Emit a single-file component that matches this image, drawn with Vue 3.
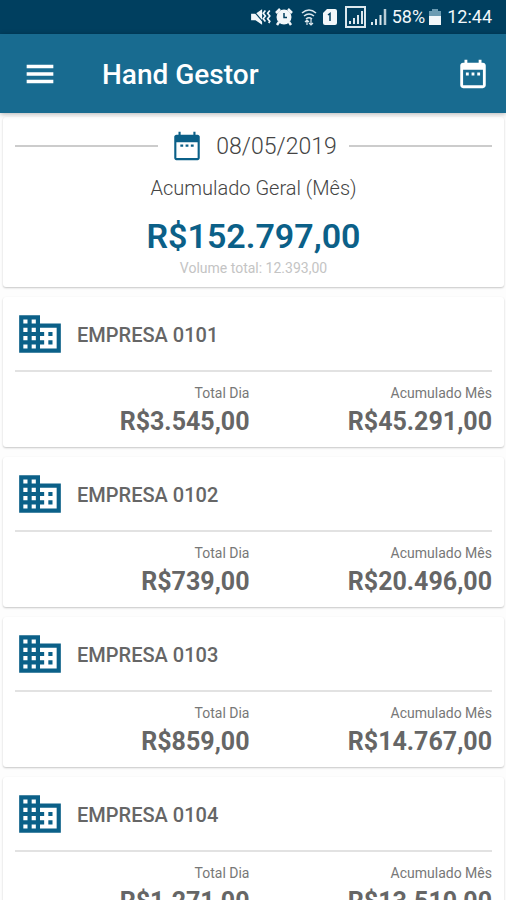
<script setup>
import { ref } from 'vue'

const date = ref('08/05/2019')

const total = {
  label: 'Acumulado Geral (Mês)',
  value: 'R$152.797,00',
  volume: '12.393,00'
}

const companies = [
  { id: 1, name: 'EMPRESA 0101', day: 'R$3.545,00', month: 'R$45.291,00' },
  { id: 2, name: 'EMPRESA 0102', day: 'R$739,00', month: 'R$20.496,00' },
  { id: 3, name: 'EMPRESA 0103', day: 'R$859,00', month: 'R$14.767,00' },
  { id: 4, name: 'EMPRESA 0104', day: 'R$1.271,00', month: 'R$13.510,00' }
]

const calendarPath = 'M9 11H7v2h2v-2zm4 0h-2v2h2v-2zm4 0h-2v2h2v-2zm2-7h-1V2h-2v2H8V2H6v2H5c-1.11 0-1.99.9-1.99 2L3 20c0 1.1.89 2 2 2h14c1.1 0 2-.9 2-2V6c0-1.1-.9-2-2-2zm0 16H5V9h14v11z'
// thinner frame than the toolbar one
const eventPath = 'M9.300 11H7.300v1.600h2zm3.700 0h-2v1.600h2zm3.700 0h-2v1.600h2zM19.500 4H18V2h-1.500v2h-9V2H6v2H4.500C3.700 4 3 4.700 3 5.500v15C3 21.300 3.700 22 4.500 22h15c.8 0 1.500-.7 1.500-1.500v-15c0-.8-.7-1.500-1.500-1.500zm0 16.500h-15V9.300h15z'
const domainPath = 'M12 7V3H2v18h20V7H12zM6 19H4v-2h2v2zm0-4H4v-2h2v2zm0-4H4V9h2v2zm0-4H4V5h2v2zm4 12H8v-2h2v2zm0-4H8v-2h2v2zm0-4H8V9h2v2zm0-4H8V5h2v2zm10 12h-8v-2h2v-2h-2v-2h2v-2h-2V9h8v10zm-2-8h-2v2h2v-2zm0 4h-2v2h2v-2z'
</script>

<template>
  <div class="app">
    <div class="status-bar">
      <!-- mute / vibrate -->
      <svg class="status-icon" width="22" height="20" viewBox="0 0 20 18">
        <path d="M1 6h4l6-4v14l-6-4H1z" fill="#f2f7fa" />
        <path d="M2 2l12 14" stroke="#003f5f" stroke-width="1" />
        <path d="M14 3l-2 2.500 2 2.500-2 2.500 2 2.500M18 3l-2 2.500 2 2.500-2 2.500 2 2.500-1 1.500" fill="none" stroke="#f2f7fa" stroke-width="1.500" />
      </svg>
      <!-- alarm -->
      <svg class="status-icon alarm" width="18" height="18" viewBox="0 0 18 18">
        <path d="M1 5l4-4M17 5l-4-4M4 14l-2 3M14 14l2 3" stroke="#f2f7fa" stroke-width="2.500" />
        <circle cx="9" cy="9" r="7.500" fill="#f2f7fa" />
        <path d="M9 5v4.500h3" fill="none" stroke="#003f5f" stroke-width="1.500" />
      </svg>
      <!-- wifi -->
      <svg class="status-icon wifi" width="16" height="18" viewBox="0 0 16 18">
        <path d="M1 5q7-6 14 0M3 8q5-4 10 0M5 11q3-2.500 6 0" fill="none" stroke="#dce8ee" stroke-width="1.600" />
        <path d="M6 17v-5M4 14l2-2 2 2M10 11v6M8 15l2 2 2-2" fill="none" stroke="#dce8ee" stroke-width="1.200" />
      </svg>
      <!-- sim -->
      <svg class="status-icon sim" width="16" height="18" viewBox="0 0 16 18">
        <path d="M5 1h8q2 0 2 2v12q0 2-2 2H3q-2 0-2-2V5z" fill="#f2f7fa" />
        <path d="M6 7l2-1.500V13" fill="none" stroke="#003f5f" stroke-width="1.500" />
      </svg>
      <svg class="status-icon signal" width="22" height="22" viewBox="0 0 22 22">
        <rect x="1" y="1" width="19" height="20" fill="none" stroke="#dce8ee" stroke-width="2" />
        <path d="M5 18v-3M9 18v-6M13 18V9M17 18V5" stroke="#dce8ee" stroke-width="2" />
      </svg>
      <svg class="status-icon" width="18" height="20" viewBox="0 0 18 20">
        <path d="M2 18v-3M6 18v-6M10.500 18V8" stroke="#dce8ee" stroke-width="2" />
        <path d="M15 18V2" stroke="#b8ccd6" stroke-width="2.500" />
      </svg>
      <span class="status-text">58%</span>
      <svg class="status-icon" width="12" height="18" viewBox="0 0 12 18">
        <path d="M3 1h6v2h3v5H0V3h3z" fill="#6b9bb2" />
        <path d="M0 8h12v9H0z" fill="#f2f7fa" />
      </svg>
      <span class="status-text clock">12:44</span>
    </div>

    <header class="toolbar">
      <button class="icon-btn" type="button" aria-label="Menu">
        <svg width="40" height="40" viewBox="0 0 24 24" fill="currentColor"><path d="M4 17.500h16v-2H4v2zm0-4.500h16v-2H4v2zM4 6.500v2h16v-2H4z" /></svg>
      </button>
      <h1 class="toolbar-title">Hand Gestor</h1>
      <button class="icon-btn" type="button" aria-label="Calendário">
        <svg width="34" height="34" viewBox="0 0 24 24" fill="currentColor"><path :d="calendarPath" /></svg>
      </button>
    </header>

    <main class="content">
      <section class="card summary">
        <div class="date-row">
          <svg class="date-icon" width="34" height="34" viewBox="0 0 24 24" fill="currentColor"><path :d="eventPath" /></svg>
          <span class="date">{{ date }}</span>
        </div>
        <p class="summary-label">{{ total.label }}</p>
        <p class="summary-value">{{ total.value }}</p>
        <p class="summary-volume">Volume total: {{ total.volume }}</p>
      </section>

      <section v-for="company in companies" :key="company.id" class="card company">
        <div class="company-header">
          <svg class="company-icon" width="50" height="50" viewBox="0 0 24 24" fill="currentColor"><path :d="domainPath" /></svg>
          <h2 class="company-name">{{ company.name }}</h2>
        </div>
        <div class="company-totals">
          <div class="total">
            <span class="total-label">Total Dia</span>
            <span class="total-value">{{ company.day }}</span>
          </div>
          <div class="total">
            <span class="total-label">Acumulado Mês</span>
            <span class="total-value">{{ company.month }}</span>
          </div>
        </div>
      </section>
    </main>
  </div>
</template>

<style>
body {
  margin: 0;
  background: #fdfdfd;
}
</style>

<style scoped>
.app {
  display: flex;
  flex-direction: column;
  height: 100vh;
  font-family: Roboto, 'Liberation Sans', sans-serif;
  color: #666;
}

.status-bar {
  display: flex;
  align-items: center;
  justify-content: flex-end;
  flex-shrink: 0;
  height: 34px;
  padding-right: 14px;
  background: #003f5f;
  color: #f2f7fa;
}

.status-icon {
  flex-shrink: 0;
}
.alarm { margin: 0 8px 0 3px; }
.wifi { margin-right: 5px; }
.sim { margin-right: 7px; }
.signal { margin-right: 3px; }

.status-text {
  margin: 0 4px;
  font-size: 18px;
  line-height: 24px;
}
.clock {
  margin-right: 0;
  margin-left: 6px;
}

.toolbar {
  display: flex;
  align-items: center;
  flex-shrink: 0;
  height: 79px;
  padding: 0 16px 0 20px;
  background: #186b90;
  color: #fff;
  box-shadow: 0 1px 5px rgba(0, 0, 0, 0.3);
  z-index: 1;
}

.icon-btn {
  display: flex;
  padding: 0;
  border: none;
  background: transparent;
  color: inherit;
  cursor: pointer;
}

.toolbar-title {
  flex: 1;
  margin: 0;
  padding: 3px 0 0 42px;
  font-size: 28px;
  font-weight: 500;
  line-height: 36px;
}

.content {
  display: flex;
  flex-direction: column;
  gap: 10px;
  flex: 1;
  min-height: 0;
  padding: 4px 2px 10px 3px;
  overflow-y: auto;
  scrollbar-width: none;
}

.card {
  flex-shrink: 0;
  border-radius: 3px;
  background: #fff;
  box-shadow: 0 1px 2px rgba(0, 0, 0, 0.22);
}

.summary {
  padding: 11px 12px;
  text-align: center;
}

.summary p {
  margin: 0;
}

.date-row {
  display: flex;
  align-items: center;
  height: 36px;
}
.date-row::before,
.date-row::after {
  content: '';
  flex: 1;
  height: 2px;
  background: #ccc;
}

.date-icon {
  margin: 0 12px;
  color: #0b6088;
}

.date {
  margin-right: 12px;
  padding-top: 2px;
  font-size: 23px;
  font-weight: 300;
  line-height: 32px;
}

.summary .summary-label {
  margin-top: 8px;
  font-size: 20px;
  font-weight: 300;
  line-height: 32px;
}

.date,
.summary-label {
  color: #444;
}

.summary .summary-value {
  margin-top: 8px;
  color: #0b6088;
  font-size: 34px;
  font-weight: 600;
  line-height: 48px;
}

.summary-volume {
  color: #c4c4c4;
  font-size: 14px;
  line-height: 16px;
}

.company {
  padding: 0 12px 8px;
}

.company-header {
  display: flex;
  align-items: center;
  gap: 12px;
  height: 73px;
  border-bottom: 2px solid #e2e2e2;
}

.company-icon {
  color: #0b6088;
}

.company-name {
  margin: 0;
  padding-top: 3px;
  font-size: 20px;
  font-weight: 500;
}

.company-totals {
  display: grid;
  grid-template-columns: 1fr 1fr;
  gap: 8px;
  padding-top: 11px;
}

.total {
  display: flex;
  flex-direction: column;
  text-align: right;
}

.total-label {
  color: #777;
  font-size: 14px;
  line-height: 20px;
}

.total-value {
  padding-top: 2px;
  font-size: 25px;
  font-weight: 700;
  line-height: 34px;
}
</style>
